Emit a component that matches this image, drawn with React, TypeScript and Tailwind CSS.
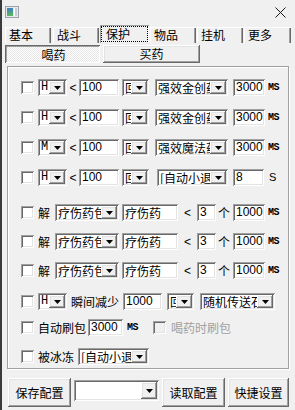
import React from 'react';

const cjk = "font-['Noto_Sans_CJK_SC',sans-serif]";
const sans = "font-['Liberation_Sans','Noto_Sans_CJK_SC',sans-serif]";
const sunken =
  'shadow-[inset_1px_1px_0_#a0a0a0,inset_-1px_-1px_0_#fff,inset_2px_2px_0_#696969,inset_-2px_-2px_0_#e3e3e3]';
const raised =
  'shadow-[inset_-1px_-1px_0_#696969,inset_1px_1px_0_#fff,inset_-2px_-2px_0_#a0a0a0,inset_2px_2px_0_#e3e3e3]';

const Arrow = () => (
  <svg width="7" height="4" viewBox="0 0 7 4">
    <polygon points="0,0 7,0 3.5,4" fill="#000" />
  </svg>
);

const Check = ({ className = '', disabled = false }: { className?: string; disabled?: boolean }) => (
  <div
    className={`w-[13px] h-[13px] shrink-0 ${disabled ? 'bg-[#f0f0f0]' : 'bg-white'} shadow-[inset_1px_1px_0_#a0a0a0,inset_-1px_-1px_0_#fff,inset_2px_2px_0_#696969,inset_-2px_-2px_0_#e3e3e3] ${className}`}
  />
);

const Combo = ({ className = '', text = '', mono = false }: { className?: string; text?: string; mono?: boolean }) => (
  <div className={`h-[17px] shrink-0 flex bg-white p-[2px] ${sunken} ${className}`}>
    <div
      className={`flex-1 overflow-hidden whitespace-nowrap pl-[1px] text-[12px] leading-[13px] text-black ${
        mono ? "font-['Liberation_Mono',monospace]" : cjk
      }`}
    >
      {text}
    </div>
    <div className={`w-[16px] h-[13px] shrink-0 flex items-center justify-center bg-[#f0f0f0] ${raised}`}>
      <Arrow />
    </div>
  </div>
);

const Field = ({ className = '', text = '', zh = false }: { className?: string; text?: string; zh?: boolean }) => (
  <div
    className={`h-[17px] shrink-0 bg-white pl-[3px] pt-[2px] overflow-hidden whitespace-nowrap text-[12px] leading-[13px] text-black ${
      zh ? cjk : sans
    } ${sunken} ${className}`}
  >
    {text}
  </div>
);

const Txt = ({ className = '', children }: { className?: string; children: React.ReactNode }) => (
  <span className={`shrink-0 text-[12px] leading-[14px] text-black whitespace-nowrap ${cjk} ${className}`}>{children}</span>
);

const Ms = ({ className = '' }: { className?: string }) => (
  <span className={`shrink-0 text-[10px] font-bold tracking-[-0.5px] text-black font-['Liberation_Mono',monospace] ${className}`}>
    MS
  </span>
);

const HpRow = ({ mt, kind, item }: { mt: string; kind: string; item: string }) => (
  <div className={`flex items-center h-[17px] ${mt}`}>
    <Check className="ml-[13px]" />
    <Combo className="ml-[4px] w-[29px]" text={kind} mono />
    <span className={`w-[12px] text-center text-[12px] text-black ${sans}`}>&lt;</span>
    <Field className="w-[40px]" text="100" />
    <Combo className="ml-[3px] w-[27px]" text="回" />
    <Combo className="ml-[6px] w-[73px]" text={item} />
    <Field className="ml-[5px] w-[32px]" text="3000" />
    <Ms className="ml-[3px]" />
  </div>
);

const CureRow = ({ mt }: { mt: string }) => (
  <div className={`flex items-center h-[17px] ${mt}`}>
    <Check className="ml-[13px]" />
    <Txt className="ml-[4px] w-[13px]">解</Txt>
    <Combo className="ml-[4px] w-[64px]" text="疗伤药包" />
    <Field className="ml-[3px] w-[56px]" text="疗伤药" zh />
    <span className={`w-[19px] text-center text-[12px] text-black ${sans}`}>&lt;</span>
    <Field className="w-[19px]" text="3" />
    <Txt className="ml-[2px] w-[13px]">个</Txt>
    <Field className="ml-[2px] w-[32px]" text="1000" />
    <Ms className="ml-[3px]" />
  </div>
);

const Tab = ({ label, className = '' }: { label: string; className?: string }) => (
  <div
    className={`h-[16px] shrink-0 pl-[4px] bg-[#f0f0f0] shadow-[inset_1px_1px_0_#fff,inset_-1px_0_0_#696969,inset_-2px_0_0_#a0a0a0] text-[12px] leading-[16px] text-black ${cjk} ${className}`}
  >
    {label}
  </div>
);

const Button = ({ label, className = '' }: { label: string; className?: string }) => (
  <div
    className={`shrink-0 flex items-center justify-center bg-[#f0f0f0] ${raised} text-[12px] text-black ${cjk} ${className}`}
  >
    {label}
  </div>
);

const App: React.FC = () => {
  return (
    <div className="relative w-[295px] h-[410px] overflow-hidden bg-[#f0f0f0] shadow-[inset_2px_0_0_#3a3a3a] select-none">
      {/* Title bar */}
      <div className="h-[25px] flex items-center">
        <svg className="ml-[5px] -mt-[2px]" width="14" height="12" viewBox="0 0 14 12">
          <rect x="0.5" y="0.5" width="13" height="11" fill="#e8e8e8" stroke="#9aa4ae" />
          <defs>
            <linearGradient id="ico" x1="0" y1="0" x2="0" y2="1">
              <stop offset="0" stopColor="#3d7fc8" />
              <stop offset="1" stopColor="#5cb85a" />
            </linearGradient>
          </defs>
          <rect x="2" y="2" width="6" height="8" fill="url(#ico)" />
          <rect x="9" y="2" width="1" height="8" fill="#ffffff" />
          <rect x="10" y="2" width="2" height="8" fill="#c8ccd0" />
        </svg>
        <svg className="ml-auto mr-[9px]" width="11" height="11" viewBox="0 0 11 11">
          <path d="M0.5 0.5 L10.5 10.5 M10.5 0.5 L0.5 10.5" stroke="#1a1a1a" strokeWidth="1" />
        </svg>
      </div>

      {/* Tabs */}
      <div className="flex items-end h-[18px]">
        <Tab label="基本" className="ml-[5px] w-[46px]" />
        <Tab label="战斗" className="ml-[2px] w-[46px]" />
        <div className="ml-[1px] w-[49px] h-[18px] shrink-0 p-[1px] bg-[#f0f0f0] shadow-[inset_1px_1px_0_#a0a0a0,inset_-1px_0_0_#fff]">
          <div className={`h-full border border-dotted border-black pl-[4px] text-[12px] leading-[14px] text-black ${cjk}`}>保护</div>
        </div>
        <Tab label="物品" className="ml-[1px] w-[46px]" />
        <Tab label="挂机" className="ml-[1px] w-[46px]" />
        <Tab label="更多" className="ml-[1px] w-[47px]" />
      </div>

      {/* Sub buttons */}
      <div className="flex mt-[2px] h-[18px]">
        <div
          className={`ml-[5px] w-[95px] h-[18px] flex items-center justify-center [background-image:repeating-conic-gradient(#ffffff_0_25%,#e6e6e6_0_50%)] [background-size:2px_2px] shadow-[inset_1px_1px_0_#696969,inset_-1px_-1px_0_#fff,inset_2px_2px_0_#a0a0a0] text-[12px] text-black ${cjk}`}
        >
          <span className="ml-[2px] mt-[1px]">喝药</span>
        </div>
        <Button label="买药" className="ml-[3px] w-[97px] h-[18px]" />
      </div>

      {/* Group box */}
      <div className="ml-[7px] mt-[3px] w-[282px] h-[303px] border border-[#a0a0a0] shadow-[inset_1px_1px_0_#fff,1px_1px_0_#fff]">
        <HpRow mt="mt-[12px]" kind="H" item="强效金创药" />
        <HpRow mt="mt-[13px]" kind="H" item="强效金创药" />
        <HpRow mt="mt-[13px]" kind="M" item="强效魔法药" />

        <div className="flex items-center h-[17px] mt-[13px]">
          <Check className="ml-[13px]" />
          <Combo className="ml-[4px] w-[29px]" text="H" mono />
          <span className={`w-[12px] text-center text-[12px] text-black ${sans}`}>&lt;</span>
          <Field className="w-[40px]" text="100" />
          <Combo className="ml-[3px] w-[27px]" text="回" />
          <Combo className="ml-[8px] w-[71px]" text="[自动小退]" />
          <Field className="ml-[5px] w-[31px]" text="8" />
          <span className={`ml-[5px] text-[11px] text-black ${sans}`}>S</span>
        </div>

        <CureRow mt="mt-[18px]" />
        <CureRow mt="mt-[12px]" />
        <CureRow mt="mt-[12px]" />

        <div className="flex items-center h-[17px] mt-[14px]">
          <Check className="ml-[13px]" />
          <Combo className="ml-[4px] w-[29px]" text="H" mono />
          <Txt className="ml-[4px] w-[50px]">瞬间减少</Txt>
          <Field className="ml-[2px] w-[39px]" text="1000" />
          <Combo className="ml-[5px] w-[27px]" text="回" />
          <Combo className="ml-[6px] w-[75px]" text="随机传送石" />
        </div>

        <div className="flex items-center h-[17px] mt-[9px]">
          <Check className="ml-[13px]" />
          <Txt className="ml-[4px] w-[48px]">自动刷包</Txt>
          <Field className="ml-[2px] w-[35px]" text="3000" />
          <Ms className="ml-[4px]" />
          <Check className="ml-[15px]" disabled />
          <Txt className="ml-[5px] !text-[#a0a0a0]">喝药时刷包</Txt>
        </div>

        <div className="flex items-center h-[17px] mt-[12px]">
          <Check className="ml-[13px]" />
          <Txt className="ml-[4px] w-[36px]">被冰冻</Txt>
          <Combo className="ml-[4px] w-[71px]" text="[自动小退]" />
        </div>
      </div>

      {/* Bottom bar */}
      <div className="flex mt-[9px] h-[29px]">
        <Button label="保存配置" className="ml-[8px] w-[63px] h-[29px]" />
        <div className={`ml-[3px] mt-[2px] w-[85px] h-[21px] flex bg-white p-[2px] ${sunken}`}>
          <div className="flex-1" />
          <div className={`w-[16px] h-[17px] flex items-center justify-center bg-[#f0f0f0] ${raised}`}>
            <Arrow />
          </div>
        </div>
        <Button label="读取配置" className="ml-[3px] w-[63px] h-[29px]" />
        <Button label="快捷设置" className="ml-[3px] w-[61px] h-[29px]" />
      </div>
    </div>
  );
};

export default App;
